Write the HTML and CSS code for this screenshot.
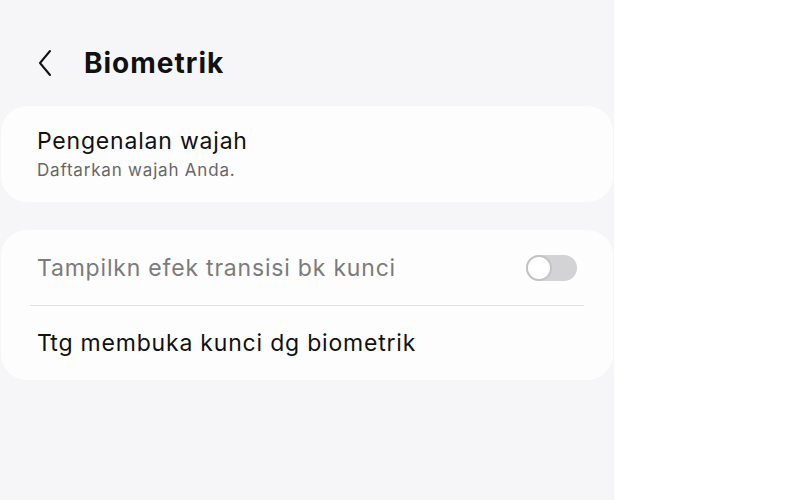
FILE: index.html
```html
<!DOCTYPE html>
<html lang="id">
<head>
    <meta charset="UTF-8">
    <meta name="viewport" content="width=device-width, initial-scale=1.0">
    <title>Biometrik</title>
    <link rel="stylesheet" href="styles.css">
</head>
<body>
    <div class="screen">
        <header class="top-bar">
            <button class="back-button" aria-label="Kembali">
                <svg width="18" height="28" viewBox="0 0 18 28">
                    <path d="M14 2 L4 14 L14 26" fill="none" stroke="#111" stroke-width="2" stroke-linecap="round" stroke-linejoin="round"/>
                </svg>
            </button>
            <h1>Biometrik</h1>
        </header>

        <section class="card">
            <div class="row row-double">
                <div class="row-title">Pengenalan wajah</div>
                <div class="row-sub">Daftarkan wajah Anda.</div>
            </div>
        </section>

        <section class="card">
            <div class="row row-switch">
                <div class="row-title disabled">Tampilkn efek transisi bk kunci</div>
                <span class="switch"><span class="knob"></span></span>
            </div>
            <div class="divider"></div>
            <div class="row">
                <div class="row-title">Ttg membuka kunci dg biometrik</div>
            </div>
        </section>
    </div>
</body>
</html>
```

FILE: styles.css
```css
body {
    margin: 0;
    background-color: #fff;
    font-family: 'Inter', 'Noto Sans', sans-serif;
    color: #111;
}

.screen {
    width: 614px;
    height: 500px;
    background-color: #f6f6f8;
    box-sizing: border-box;
    padding-top: 42px;
}

.top-bar {
    display: flex;
    align-items: center;
    height: 42px;
    margin-bottom: 22px;
}

.back-button {
    background: none;
    border: none;
    padding: 0;
    margin-left: 36px;
    width: 18px;
    height: 28px;
    display: flex;
}

.top-bar h1 {
    margin: 0 0 0 30px;
    font-size: 28px;
    font-weight: 700;
    letter-spacing: 1px;
}

.card {
    background-color: #fdfdfd;
    border-radius: 26px;
    margin: 0 1px 28px 1px;
}

.row {
    display: flex;
    align-items: center;
    padding: 0 36px;
    height: 74px;
}

.row-double {
    flex-direction: column;
    align-items: flex-start;
    justify-content: center;
    height: 96px;
}

.row-double .row-sub {
    margin-top: 3px;
}

.row-switch {
    justify-content: space-between;
    height: 75px;
}

.row-title {
    font-size: 23px;
    line-height: 28px;
    letter-spacing: 0.8px;
}

.row-title.disabled {
    color: #7b7b7b;
}

.row-sub {
    font-size: 17px;
    line-height: 24px;
    letter-spacing: 0.8px;
    color: #666;
}

.divider {
    height: 1px;
    background-color: #e2e2e5;
    margin: 0 29px;
}

.switch {
    position: relative;
    width: 51px;
    height: 26px;
    border-radius: 13px;
    background-color: #d3d3d6;
}

.knob {
    position: absolute;
    left: 0;
    top: 0;
    width: 22px;
    height: 22px;
    border-radius: 50%;
    background-color: #fff;
    border: 2px solid #c4c4c8;
}
```
